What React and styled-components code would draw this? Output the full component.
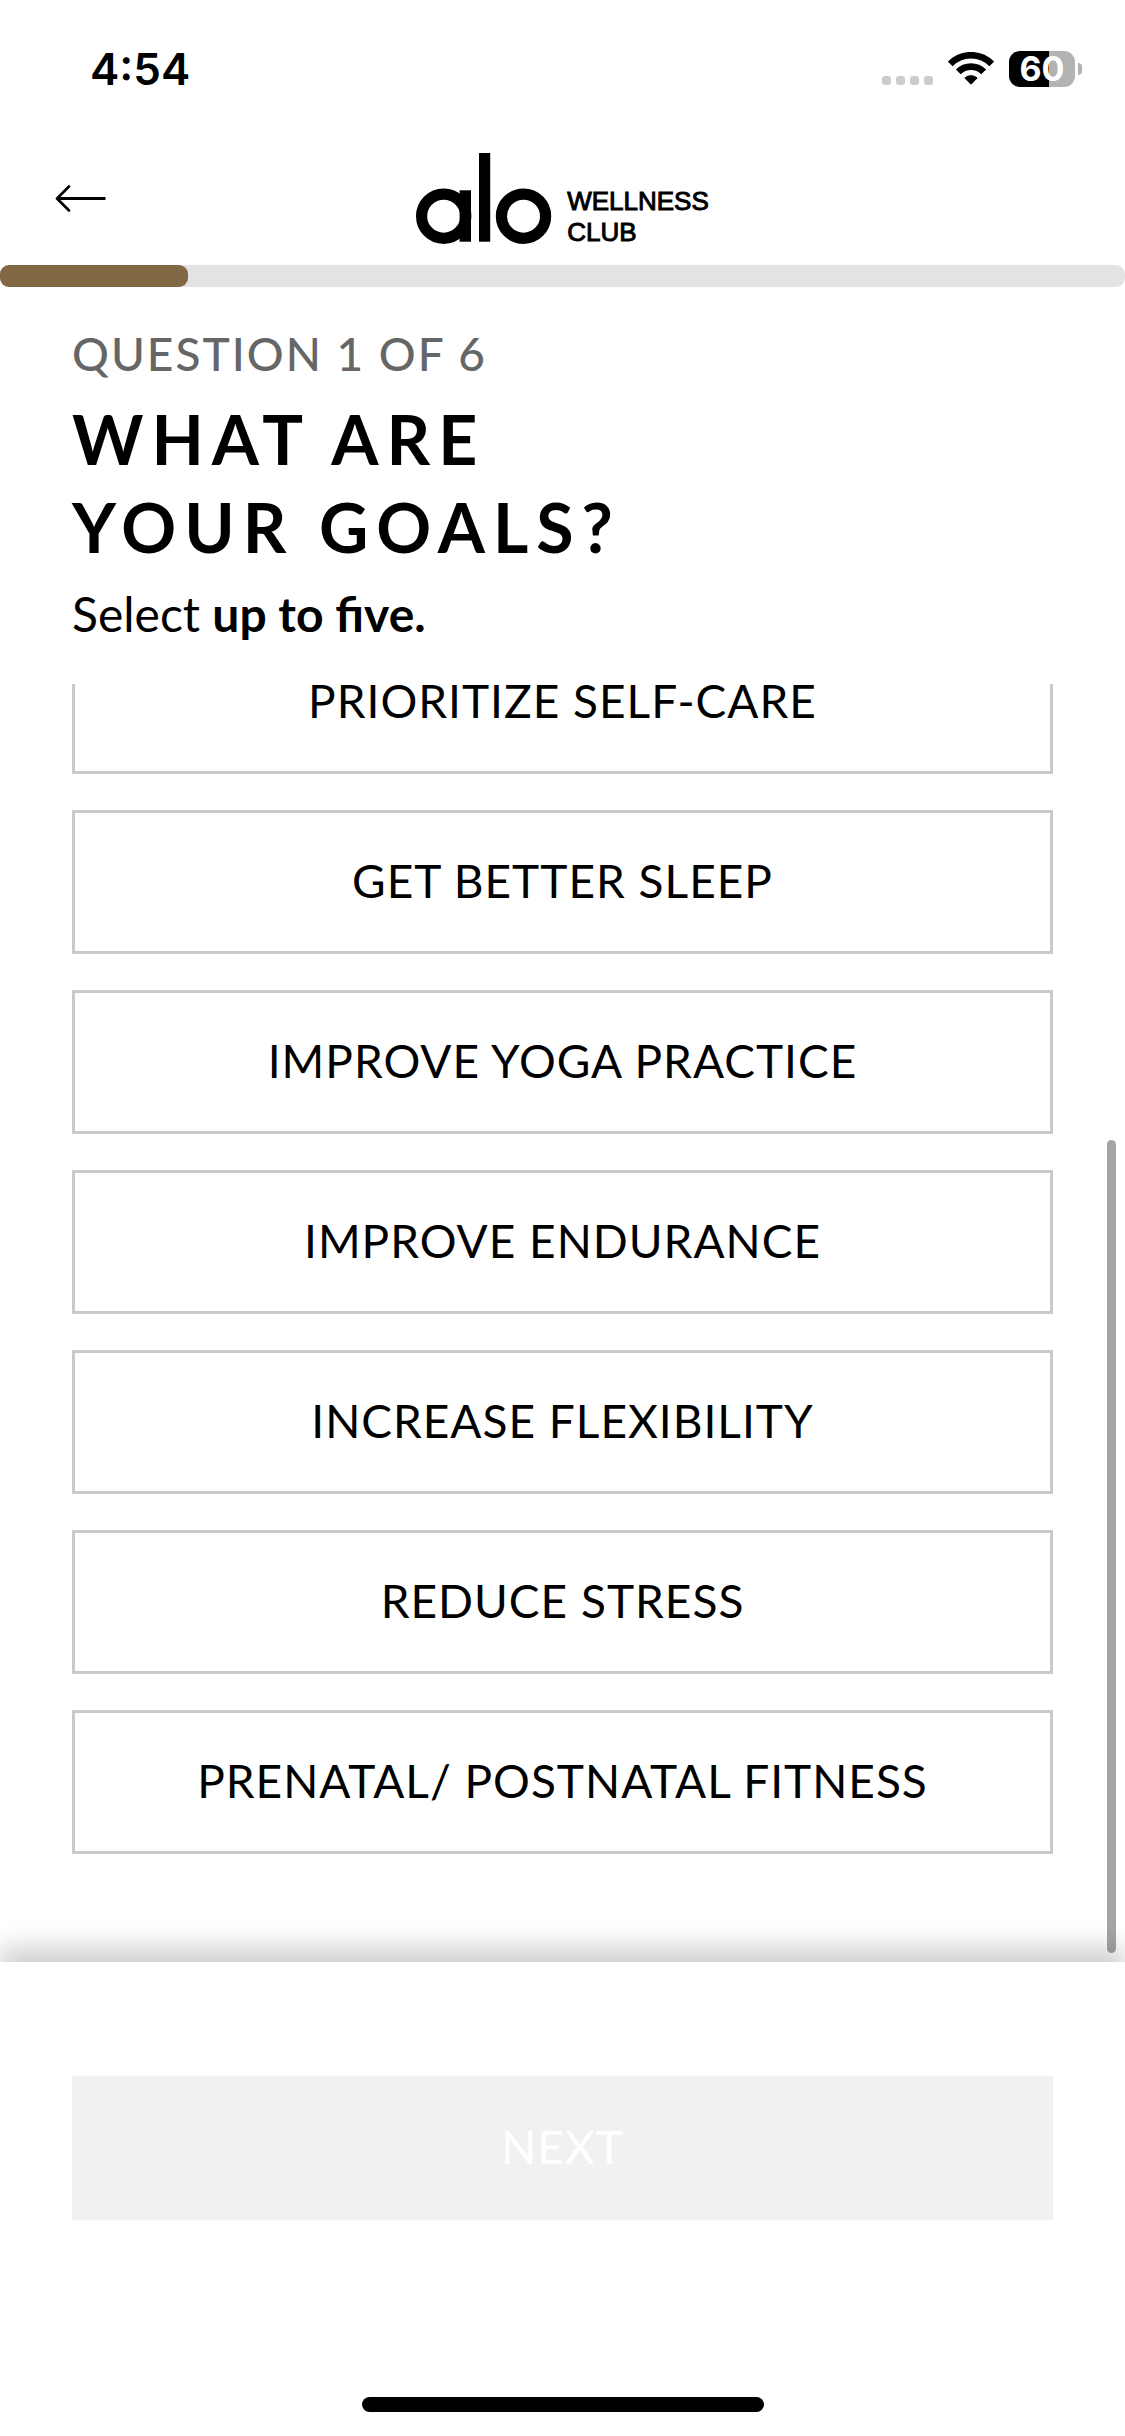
import React from "react";
import styled, { createGlobalStyle } from "styled-components";

const GOALS = [
  "PRIORITIZE SELF-CARE",
  "GET BETTER SLEEP",
  "IMPROVE YOGA PRACTICE",
  "IMPROVE ENDURANCE",
  "INCREASE FLEXIBILITY",
  "REDUCE STRESS",
  "PRENATAL/ POSTNATAL FITNESS",
];

const MAX_GOALS = 5;

/**
 * Styles
 */

const GlobalStyle = createGlobalStyle`
  * {
    box-sizing: border-box;
  }
  body {
    margin: 0;
    background-color: #fff;
    color: #000;
    font-family: Lato, "Open Sans", sans-serif;
  }
  button {
    font-family: inherit;
    cursor: pointer;
  }
`;

const Screen = styled.main`
  display: flex;
  flex-direction: column;
  height: 100vh;
`;

/* status bar */

const StatusBar = styled.div`
  display: flex;
  justify-content: space-between;
  align-items: center;
  height: 138px;
  padding: 0 43px 0 90px;
`;

const Time = styled.span`
  font-family: Inter, sans-serif;
  font-size: 44px;
  font-weight: 600;
`;

const StatusIcons = styled.div`
  display: flex;
  align-items: center;
  gap: 15px;
`;

const Signal = styled.div`
  display: flex;
  align-self: flex-end;
  gap: 5px;
  padding-bottom: 2px;
`;

const SignalDot = styled.span`
  width: 9px;
  height: 9px;
  border-radius: 3px;
  background-color: #ccc;
`;

const Battery = styled.div`
  display: flex;
  align-items: center;
  gap: 3px;
`;

const BatteryLevel = styled.span`
  width: 66px;
  height: 36px;
  border-radius: 11px;
  background: linear-gradient(to right, #000 60%, #b3b3b3 60%);
  color: #fff;
  font-family: Inter, sans-serif;
  font-size: 34px;
  font-weight: 700;
  line-height: 36px;
  text-align: center;
`;

const BatteryTip = styled.span`
  width: 4px;
  height: 12px;
  border-radius: 0 4px 4px 0;
  background-color: #b3b3b3;
`;

/* header */

const Header = styled.header`
  display: grid;
  grid-template-columns: 1fr auto 1fr;
  align-items: start;
  padding: 15px 55px 17px;
`;

const BackButton = styled.button`
  display: flex;
  align-items: center;
  justify-self: start;
  height: 90px;
  padding: 0;
  border: 0;
  background-color: transparent;
`;

const Logo = styled.div`
  display: flex;
  align-items: flex-start;
  gap: 15px;
`;

const LogoText = styled.span`
  padding-top: 33px;
  font-family: "Liberation Sans", Arial, sans-serif;
  font-size: 26px;
  line-height: 31px;
  -webkit-text-stroke: 1px #000;
`;

const Track = styled.div`
  height: 22px;
  border-radius: 9px;
  background-color: #e3e3e3;
`;

const TrackFill = styled.div`
  height: 100%;
  border-radius: 9px;
  background-color: #826745;
`;

/* question */

const Intro = styled.section`
  padding: 39px 72px 42px;
`;

const Step = styled.p`
  margin: 0;
  color: #666;
  font-size: 46px;
  font-weight: 500;
  line-height: 56px;
  letter-spacing: 2px;
`;

const Title = styled.h1`
  margin: 13px 0 0;
  font-size: 68px;
  font-weight: 700;
  line-height: 88px;
  letter-spacing: 8px;
`;

const Hint = styled.p`
  margin: 14px 0 0;
  font-size: 48px;
  line-height: 57px;
`;

/* goals */

const ListArea = styled.section`
  position: relative;
  flex: 1;
  min-height: 0;
`;

const List = styled.div`
  display: flex;
  flex-direction: column;
  gap: 36px;
  height: 100%;
  padding: 0 72px 108px;
  overflow-y: auto;
  scrollbar-width: none;
`;

const OptionButton = styled.button`
  flex-shrink: 0;
  height: 144px;
  padding: 0 0 3px;
  border: 3px solid ${({ $active }) => ($active ? "#000" : "#cacaca")};
  background-color: transparent;
  color: #000;
  font-size: 46px;
  letter-spacing: 1px;
`;

const ScrollThumb = styled.div`
  position: absolute;
  right: 9px;
  bottom: 9px;
  width: 9px;
  height: 63.6%;
  border-radius: 5px;
  background-color: #a5a5a5;
`;

/* footer */

const Footer = styled.footer`
  position: relative;
  display: flex;
  flex-direction: column;
  align-items: center;
  gap: 177px;
  padding: 114px 72px 24px;
  background-color: #fff;
  box-shadow: 0 -15px 24px rgba(0, 0, 0, 0.19);
`;

const NextButton = styled.button`
  width: 100%;
  height: 144px;
  padding: 0 0 3px;
  border: 0;
  background-color: #000;
  color: #fff;
  font-size: 46px;
  letter-spacing: 1px;

  &:disabled {
    background-color: #f1f1f1;
    cursor: default;
  }
`;

const HomeIndicator = styled.div`
  width: 402px;
  height: 15px;
  border-radius: 8px;
  background-color: #000;
`;

/**
 * Icons
 */

const WifiIcon = () => (
  <svg width="46" height="34" viewBox="0 0 46 34" fill="none" aria-hidden="true">
    <path d="M2.3 11.9A29 29 0 0 1 43.7 11.9" stroke="#000" strokeWidth="6.6" />
    <path d="M10.3 19.9A17.9 17.9 0 0 1 35.7 19.9" stroke="#000" strokeWidth="6.8" />
    <path
      d="M23 32.2L16.8 26A9.4 9.4 0 0 1 29.2 26Z"
      fill="#000"
      stroke="#000"
      strokeLinejoin="round"
    />
  </svg>
);

const BackIcon = () => (
  <svg width="51" height="27" viewBox="0 0 51 27" fill="none" aria-hidden="true">
    <path d="M2 13.5H50.5" stroke="#000" strokeWidth="3" />
    <path
      d="M14 1.5L2 13.5L14 25.5"
      stroke="#000"
      strokeWidth="2.6"
      strokeLinecap="round"
      strokeLinejoin="round"
    />
  </svg>
);

const AloMark = () => (
  <svg width="136" height="92" viewBox="0 0 136 92" role="img" aria-label="alo">
    <circle cx="27.7" cy="63.2" r="22.1" fill="none" stroke="#000" strokeWidth="11.2" />
    <rect x="43.6" y="37.3" width="11.4" height="51.4" />
    <rect x="63" y="0" width="11.2" height="88.7" />
    <circle cx="107.5" cy="63.2" r="22.1" fill="none" stroke="#000" strokeWidth="11.2" />
  </svg>
);

export default function App() {
  const [selected, setSelected] = React.useState([]);
  const listRef = React.useRef(null);

  React.useLayoutEffect(() => {
    listRef.current.scrollTop = listRef.current.scrollHeight;
  }, []);

  const toggle = (goal) => {
    if (selected.includes(goal)) {
      setSelected(selected.filter((item) => item !== goal));
    } else if (selected.length < MAX_GOALS) {
      setSelected([...selected, goal]);
    }
  };

  return (
    <Screen>
      <GlobalStyle />
      <StatusBar>
        <Time>4:54</Time>
        <StatusIcons>
          <Signal>
            <SignalDot />
            <SignalDot />
            <SignalDot />
            <SignalDot />
          </Signal>
          <WifiIcon />
          <Battery>
            <BatteryLevel>60</BatteryLevel>
            <BatteryTip />
          </Battery>
        </StatusIcons>
      </StatusBar>

      <Header>
        <BackButton aria-label="Back">
          <BackIcon />
        </BackButton>
        <Logo>
          <AloMark />
          <LogoText>
            WELLNESS
            <br />
            CLUB
          </LogoText>
        </Logo>
      </Header>

      <Track role="progressbar" aria-valuenow={1} aria-valuemin={0} aria-valuemax={6}>
        <TrackFill style={{ width: `${(1 / 6) * 100}%` }} />
      </Track>

      <Intro>
        <Step>QUESTION 1 OF 6</Step>
        <Title>
          WHAT ARE
          <br />
          YOUR GOALS?
        </Title>
        <Hint>
          Select <b>up to five.</b>
        </Hint>
      </Intro>

      <ListArea>
        <List ref={listRef}>
          {GOALS.map((goal) => (
            <OptionButton
              key={goal}
              aria-pressed={selected.includes(goal)}
              $active={selected.includes(goal)}
              onClick={() => toggle(goal)}
            >
              {goal}
            </OptionButton>
          ))}
        </List>
        <ScrollThumb />
      </ListArea>

      <Footer>
        <NextButton disabled={selected.length === 0}>NEXT</NextButton>
        <HomeIndicator />
      </Footer>
    </Screen>
  );
}
